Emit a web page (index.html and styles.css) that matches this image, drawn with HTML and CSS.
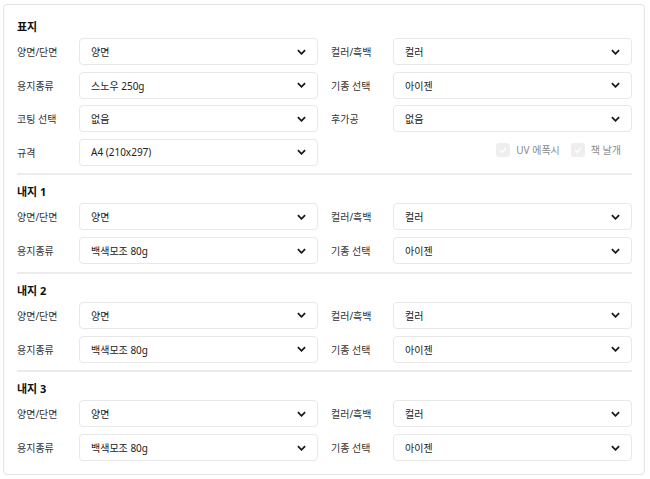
FILE: index.html
```html
<!DOCTYPE html>
<html lang="ko">
<head>
<meta charset="utf-8">
<link rel="stylesheet" href="styles.css">
</head>
<body>
<div class="card">
  <section class="section section-cover">
    <h3 class="title">표지</h3>
    <div class="grid">
      <div class="field"><span class="label">양면/단면</span><div class="select"><span>양면</span><svg class="chev" viewBox="0 0 10 6"><polyline points="1,1 5,5 9,1"/></svg></div></div>
      <div class="field"><span class="label">컬러/흑백</span><div class="select"><span>컬러</span><svg class="chev" viewBox="0 0 10 6"><polyline points="1,1 5,5 9,1"/></svg></div></div>
      <div class="field"><span class="label">용지종류</span><div class="select"><span>스노우 250g</span><svg class="chev" viewBox="0 0 10 6"><polyline points="1,1 5,5 9,1"/></svg></div></div>
      <div class="field"><span class="label">기종 선택</span><div class="select"><span>아이젠</span><svg class="chev" viewBox="0 0 10 6"><polyline points="1,1 5,5 9,1"/></svg></div></div>
      <div class="field"><span class="label">코팅 선택</span><div class="select"><span>없음</span><svg class="chev" viewBox="0 0 10 6"><polyline points="1,1 5,5 9,1"/></svg></div></div>
      <div class="field"><span class="label">후가공</span><div class="select"><span>없음</span><svg class="chev" viewBox="0 0 10 6"><polyline points="1,1 5,5 9,1"/></svg></div></div>
      <div class="field"><span class="label">규격</span><div class="select"><span>A4 (210x297)</span><svg class="chev" viewBox="0 0 10 6"><polyline points="1,1 5,5 9,1"/></svg></div></div>
      <div class="checks">
        <label class="check"><span class="box"><svg viewBox="0 0 14 14"><polyline points="4,7.2 6.2,9.4 10,5"/></svg></span>UV 에폭시</label>
        <label class="check"><span class="box"><svg viewBox="0 0 14 14"><polyline points="4,7.2 6.2,9.4 10,5"/></svg></span>책 날개</label>
      </div>
    </div>
  </section>
  <section class="section">
    <h3 class="title">내지 1</h3>
    <div class="grid">
      <div class="field"><span class="label">양면/단면</span><div class="select"><span>양면</span><svg class="chev" viewBox="0 0 10 6"><polyline points="1,1 5,5 9,1"/></svg></div></div>
      <div class="field"><span class="label">컬러/흑백</span><div class="select"><span>컬러</span><svg class="chev" viewBox="0 0 10 6"><polyline points="1,1 5,5 9,1"/></svg></div></div>
      <div class="field"><span class="label">용지종류</span><div class="select"><span>백색모조 80g</span><svg class="chev" viewBox="0 0 10 6"><polyline points="1,1 5,5 9,1"/></svg></div></div>
      <div class="field"><span class="label">기종 선택</span><div class="select"><span>아이젠</span><svg class="chev" viewBox="0 0 10 6"><polyline points="1,1 5,5 9,1"/></svg></div></div>
    </div>
  </section>
  <section class="section">
    <h3 class="title">내지 2</h3>
    <div class="grid">
      <div class="field"><span class="label">양면/단면</span><div class="select"><span>양면</span><svg class="chev" viewBox="0 0 10 6"><polyline points="1,1 5,5 9,1"/></svg></div></div>
      <div class="field"><span class="label">컬러/흑백</span><div class="select"><span>컬러</span><svg class="chev" viewBox="0 0 10 6"><polyline points="1,1 5,5 9,1"/></svg></div></div>
      <div class="field"><span class="label">용지종류</span><div class="select"><span>백색모조 80g</span><svg class="chev" viewBox="0 0 10 6"><polyline points="1,1 5,5 9,1"/></svg></div></div>
      <div class="field"><span class="label">기종 선택</span><div class="select"><span>아이젠</span><svg class="chev" viewBox="0 0 10 6"><polyline points="1,1 5,5 9,1"/></svg></div></div>
    </div>
  </section>
  <section class="section">
    <h3 class="title">내지 3</h3>
    <div class="grid">
      <div class="field"><span class="label">양면/단면</span><div class="select"><span>양면</span><svg class="chev" viewBox="0 0 10 6"><polyline points="1,1 5,5 9,1"/></svg></div></div>
      <div class="field"><span class="label">컬러/흑백</span><div class="select"><span>컬러</span><svg class="chev" viewBox="0 0 10 6"><polyline points="1,1 5,5 9,1"/></svg></div></div>
      <div class="field"><span class="label">용지종류</span><div class="select"><span>백색모조 80g</span><svg class="chev" viewBox="0 0 10 6"><polyline points="1,1 5,5 9,1"/></svg></div></div>
      <div class="field"><span class="label">기종 선택</span><div class="select"><span>아이젠</span><svg class="chev" viewBox="0 0 10 6"><polyline points="1,1 5,5 9,1"/></svg></div></div>
    </div>
  </section>
</div>
</body>
</html>
```

FILE: styles.css
```css
* { box-sizing: border-box; }
html, body { margin: 0; padding: 0; background: #fff; }
body {
  font-family: "Noto Sans", "Noto Sans CJK KR", sans-serif;
  font-size: 10px;
  color: #222;
  padding: 4px 5px 0 3px;
}
.card {
  border: 1px solid #e3e3e3;
  border-radius: 4px;
  padding: 5px 12px 5px 13px;
  height: 471px;
}
.section {
  padding: 8px 0 7.5px;
  border-bottom: 2px solid #ececec;
}
.section:last-child { border-bottom: none; }
.title {
  margin: 0 0 3px;
  font-size: 11px;
  font-weight: 700;
  line-height: 17px;
  color: #111;
}
.grid {
  display: grid;
  grid-template-columns: 1fr 1fr;
  column-gap: 13px;
  row-gap: 7px;
}
.section-cover .grid { row-gap: 6.5px; }
.field {
  display: flex;
  align-items: center;
  height: 27px;
}
.label {
  width: 62px;
  flex: none;
  color: #333;
}
.select {
  flex: 1;
  height: 27px;
  border: 1px solid #e8e8e8;
  border-radius: 4px;
  display: flex;
  align-items: center;
  justify-content: space-between;
  padding: 0 11px 0 11px;
  color: #222;
}
.chev {
  width: 9px;
  height: 6px;
  fill: none;
  stroke: #1a1a1a;
  stroke-width: 2;
}
.checks {
  display: flex;
  justify-content: flex-end;
  align-items: center;
  gap: 11px;
  padding-right: 11px;
  height: 22px;
  color: #8a8a8a;
}
.check {
  display: flex;
  align-items: center;
  gap: 6px;
}
.box {
  width: 14px;
  height: 14px;
  border-radius: 3px;
  background: #eeeeee;
  display: flex;
}
.box svg {
  width: 14px;
  height: 14px;
  fill: none;
  stroke: #fff;
  stroke-width: 1.4;
}
```
